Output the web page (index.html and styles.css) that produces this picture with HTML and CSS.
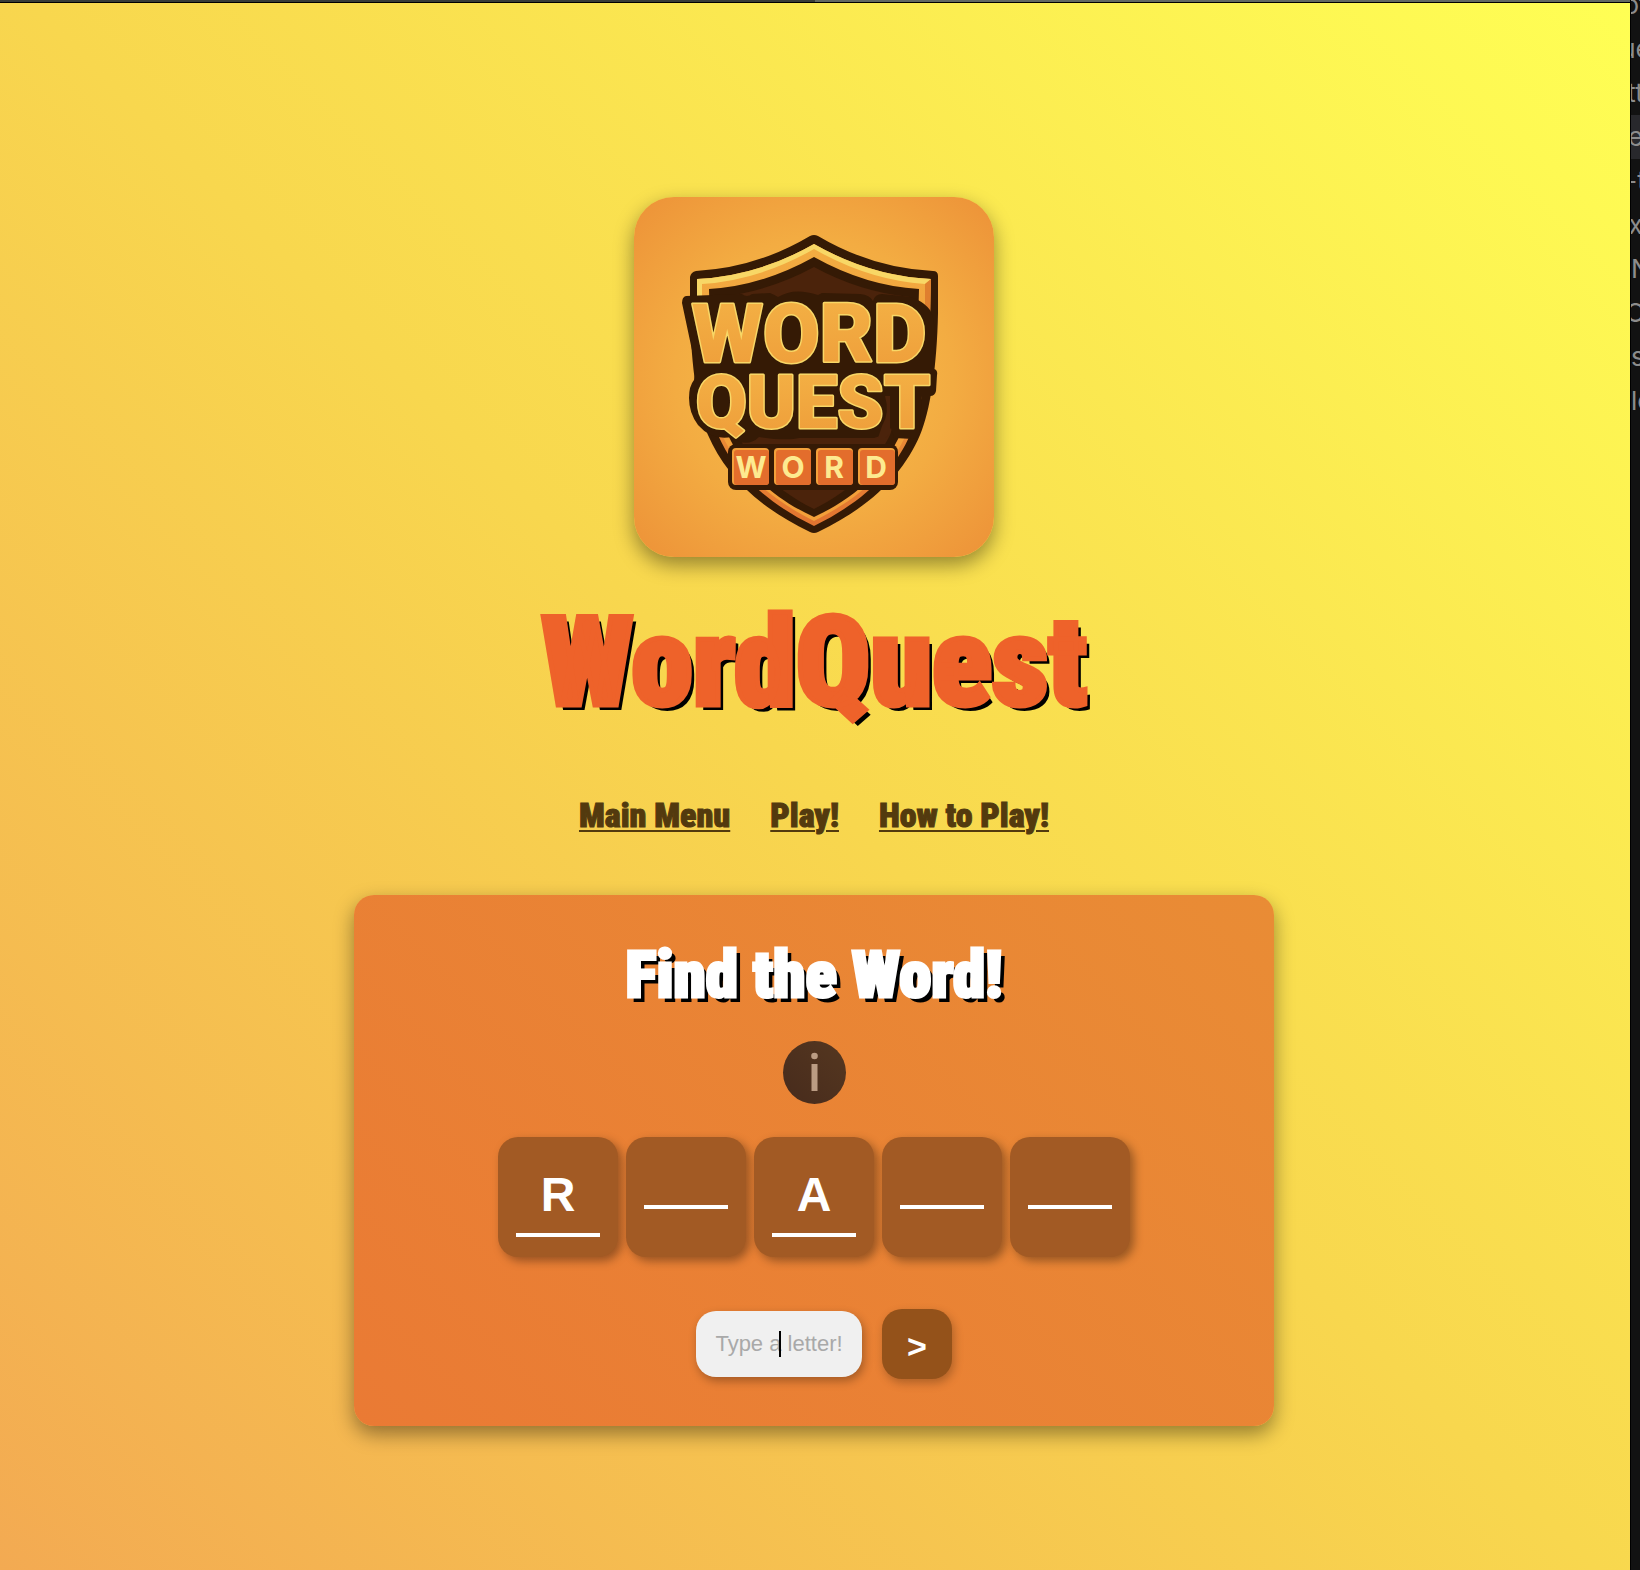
FILE: index.html
```html
<!DOCTYPE html>
<html lang="en">
<head>
<meta charset="utf-8">
<title>WordQuest</title>
<meta name="viewport" content="width=device-width, initial-scale=1">
<link rel="stylesheet" href="styles.css">
</head>
<body>
<div class="desktop">
  <div class="window">
    <div class="window-bar"></div>
    <main class="game">
      <svg class="logo" viewBox="0 0 360 360" role="img" aria-label="WordQuest logo">
        <defs>
          <radialGradient id="glow" cx="50%" cy="50%" r="70%">
            <stop offset="0" stop-color="#f8c04c"/>
            <stop offset="0.55" stop-color="#f3ac42"/>
            <stop offset="1" stop-color="#ed9238"/>
          </radialGradient>
          <linearGradient id="rim" x1="0" y1="0" x2="0" y2="1">
            <stop offset="0" stop-color="#f3ad42"/>
            <stop offset="0.35" stop-color="#f0a03c"/>
            <stop offset="1" stop-color="#e27430"/>
          </linearGradient>
          <linearGradient id="letters" x1="0" y1="0" x2="0" y2="1">
            <stop offset="0" stop-color="#f4b346"/>
            <stop offset="1" stop-color="#ee9c39"/>
          </linearGradient>
        </defs>
        <rect width="360" height="360" fill="url(#glow)"/>
        <path d="M176 39Q180 37 184 39Q238 71 299 74Q304 74 304 79L304 116C303 170 296 215 286 238C270 275 240 308 184 335Q180 337 176 335C120 308 90 275 74 238C64 215 57 170 56 116L56 80Q57 75 62 74Q122 71 176 39Z" fill="#351a05"/>
        <path d="M180 47Q236 79 297 82L296 122C295 170 288 210 276 238C262 270 235 302 180 329C125 302 98 270 84 238C72 210 65 170 64 122L63 82Q124 79 180 47Z" fill="url(#rim)"/>
        <path d="M180 47Q236 79 297 82L291 87Q234 83 180 52Q126 83 68 87L68 105L63 105L63 82Q124 79 180 47Z" fill="#f8d766"/>
        <path d="M297 82L291 87L291 125L296 125Z" fill="#df7f2f"/>
        <path d="M272 238C258 268 232 298 180 324C128 298 102 268 88 238Z" fill="#f3a03a"/>
        <path d="M180 60Q232 89 285 92L284 128C283 170 277 210 266 238C252 268 228 298 180 320C132 298 108 268 94 238C83 210 77 170 76 128L75 92Q128 89 180 60Z" fill="#351a05"/>
        <path d="M180 70Q226 95 276 100L274 130C272 170 267 210 256 238C242 266 222 291 180 312C138 291 118 266 104 238C93 210 88 170 86 130L84 100Q134 95 180 70Z" fill="#4b230b"/>
        <path d="M52 99L108 97Q113 101 118 97L136 96Q141 98 144 100Q160 90 184 98L188 96L226 97Q236 98 239 104Q241 97 248 97L268 99Q286 100 296 113Q301 121 301 145L300 172Q304 173 303 178L302 194Q301 199 296 199L288 199L285 237Q284 241 279 242L260 241L257 231Q254 237 240 241L165 241Q158 243 140 242L125 240Q117 248 106 245L98 240Q78 244 64 228Q55 216 55 201Q55 189 60 183L62 172L48 106Q48 100 52 99Z" fill="#351a05"/>
        <path d="M251 199L256 199L256 237L251 241L244 241L248 229Q256 216 251 199Z" fill="#4b230b"/>
        <g class="logo-word">
          <text x="175" y="165">WORD</text>
          <text class="logo-quest" x="179" y="231">QUEST</text>
        </g>
        <rect x="94" y="247" width="170" height="46" rx="8" fill="#351a05"/>
        <g fill="#f4a13b">
          <rect x="98" y="251" width="37" height="37" rx="4"/>
          <rect x="140" y="251" width="37" height="37" rx="4"/>
          <rect x="182" y="251" width="37" height="37" rx="4"/>
          <rect x="224" y="251" width="37" height="37" rx="4"/>
        </g>
        <g fill="#e36d2c">
          <rect x="100" y="253" width="35" height="35" rx="3"/>
          <rect x="142" y="253" width="35" height="35" rx="3"/>
          <rect x="184" y="253" width="35" height="35" rx="3"/>
          <rect x="226" y="253" width="35" height="35" rx="3"/>
        </g>
        <g class="logo-tile">
          <text x="117" y="281">W</text>
          <text x="159" y="281">O</text>
          <text x="200" y="281">R</text>
          <text x="242" y="281">D</text>
        </g>
      </svg>
      <h1 class="title">WordQuest</h1>
      <nav class="menu">
        <a href="#menu">Main Menu</a>
        <a href="#play">Play!</a>
        <a href="#how">How to Play!</a>
      </nav>
      <section class="card">
        <h2 class="card-title">Find the Word!</h2>
        <button class="info" type="button" aria-label="Information">
          <svg viewBox="0 0 63 63" aria-hidden="true">
            <circle cx="31.5" cy="15" r="3.3"/>
            <rect x="28.5" y="23" width="6" height="27"/>
          </svg>
        </button>
        <div class="tiles">
          <div class="tile"><span>R</span></div>
          <div class="tile"><span></span></div>
          <div class="tile"><span>A</span></div>
          <div class="tile"><span></span></div>
          <div class="tile"><span></span></div>
        </div>
        <form class="guess">
          <label class="guess-field">
            <input type="text" maxlength="1" placeholder="Type a letter!" aria-label="Type a letter">
          </label>
          <button class="guess-send" type="button">&gt;</button>
        </form>
      </section>
    </main>
  </div>
  <aside class="behind">
    <ul>
      <li>ot</li>
      <li>ue</li>
      <li>tt</li>
      <li class="current">e</li>
      <li>-t</li>
      <li>x</li>
      <li class="start">N</li>
      <li>O</li>
      <li class="start">s</li>
      <li class="start">lo</li>
    </ul>
  </aside>
</div>
</body>
</html>
```
FILE: styles.css
```css
* { box-sizing: border-box; }

body {
  margin: 0;
  font-family: "Liberation Sans", Arial, sans-serif;
  background: #111;
}

.desktop {
  display: grid;
  grid-template-columns: minmax(0, 1fr) 10px;
  min-height: 100vh;
}

.window {
  display: flex;
  flex-direction: column;
}

.window-bar {
  height: 3px;
  border-bottom: 1px solid #000;
  background: linear-gradient(90deg, #383c38 50%, #626862 50%);
}

.game {
  flex: 1;
  display: flex;
  flex-direction: column;
  align-items: center;
  padding: 194px 22px 143px 20px;
  background: linear-gradient(45deg, #f3aa52, #f8d74e 50%, #ffff54);
}

.logo {
  display: block;
  width: 360px;
  height: 360px;
  border-radius: 40px;
  box-shadow: 0 8px 20px rgba(0, 0, 0, 0.4);
}

.logo-word {
  font-family: Roboto, sans-serif;
  font-weight: 900;
  font-size: 82px;
  text-anchor: middle;
  fill: url(#letters);
  stroke: #f8d766;
  stroke-width: 3px;
  stroke-linejoin: round;
  paint-order: stroke;
}

.logo-quest { font-size: 74px; }

.logo-tile {
  font-family: Inter, sans-serif;
  font-weight: 700;
  font-size: 30px;
  text-anchor: middle;
  fill: #fdea90;
}

.title,
.menu,
.card-title {
  font-family: Impact, "Roboto Condensed", Roboto, sans-serif;
  font-weight: 900;
}

.title {
  margin: 42px 0 0;
  font-size: 124px;
  line-height: 128px;
  color: #ee622a;
  -webkit-text-stroke: 5px #ee622a;
  text-shadow: 5px 5px 0 #000;
}

.menu {
  display: flex;
  gap: 40px;
  margin-top: 68px;
  font-size: 34px;
  line-height: 40px;
}

.menu a {
  color: #533a0e;
  -webkit-text-stroke: 1px #533a0e;
  text-decoration-thickness: 2px;
  text-underline-offset: 3px;
}

.card {
  display: flex;
  flex-direction: column;
  align-items: center;
  width: 100%;
  max-width: 920px;
  margin-top: 60px;
  padding: 44px 20px 47px;
  border-radius: 20px;
  background: linear-gradient(45deg, #ea7a34, #e98c35);
  box-shadow: 0 8px 20px rgba(0, 0, 0, 0.4);
}

.card-title {
  margin: 0;
  font-size: 65px;
  line-height: 72px;
  color: #fff;
  -webkit-text-stroke: 3px #fff;
  text-shadow: 5px 5px 0 #000;
}

.info {
  width: 63px;
  height: 63px;
  margin-top: 30px;
  padding: 0;
  border: 0;
  border-radius: 50%;
  background: linear-gradient(45deg, #472b1c, #553720);
}

.info svg {
  display: block;
  fill: #bb9c83;
}

.tiles {
  display: flex;
  gap: 8px;
  margin-top: 33px;
}

.tile {
  display: flex;
  align-items: center;
  width: 120px;
  height: 120px;
  padding: 0 18px;
  border-radius: 20px;
  background: #a25a24;
  box-shadow: 4px 4px 10px rgba(0, 0, 0, 0.35);
}

.tile span {
  flex: 1;
  padding: 10px 0;
  border-bottom: 4px solid #fff;
  font-size: 48px;
  font-weight: 700;
  line-height: 56px;
  text-align: center;
  color: #fff;
}

.guess {
  display: flex;
  align-items: center;
  gap: 20px;
  margin: 52px 0 0 20px;
}

.guess-field { position: relative; }

/* Text cursor resting in the middle of the empty field */
.guess-field::after {
  content: "";
  position: absolute;
  top: 20px;
  left: 50%;
  width: 2px;
  height: 26px;
  background: #000;
}

.guess-field input {
  display: block;
  width: 166px;
  height: 66px;
  padding: 0 18px;
  border: 0;
  border-radius: 20px;
  background: #f0f0f0;
  box-shadow: 2px 4px 10px rgba(0, 0, 0, 0.3);
  font: 22px "Liberation Sans", Arial, sans-serif;
  text-align: center;
}

.guess-field input::placeholder { color: #a9a9a9; }

.guess-send {
  width: 70px;
  height: 70px;
  padding: 4px 0 0;
  border: 0;
  border-radius: 20px;
  background: #94521a;
  box-shadow: 2px 4px 10px rgba(0, 0, 0, 0.25);
  font: 700 34px "Liberation Sans", Arial, sans-serif;
  color: #fff;
}

.behind {
  overflow: hidden;
  border-left: 1px solid #000;
  background: #121212;
}

.behind ul {
  margin: -17px 0 0;
  padding: 0;
  list-style: none;
  font: 26px/44px Inter, sans-serif;
  color: #8c8c8c;
  white-space: nowrap;
}

.behind li {
  display: flex;
  justify-content: center;
}

.behind .start { justify-content: flex-start; }
.behind .current { background: #28282c; }
```
